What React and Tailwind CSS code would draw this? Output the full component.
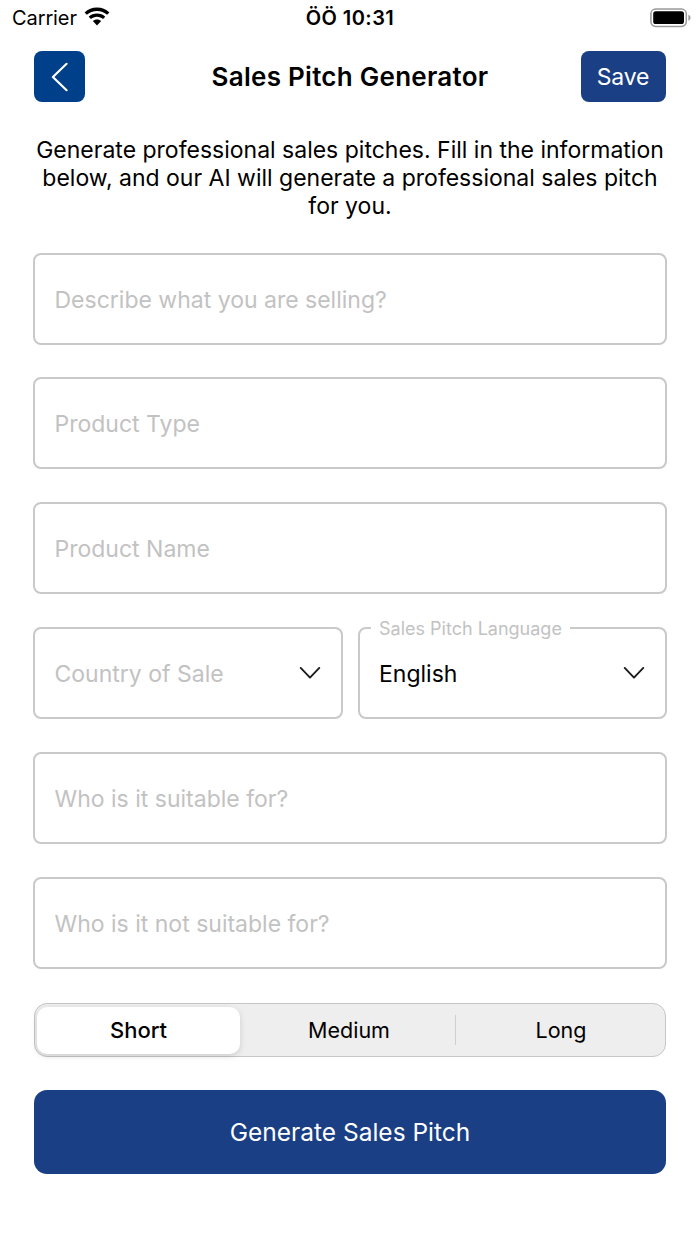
const inputBox =
  "flex h-[92px] items-center rounded-[8px] border-2 border-[#c9c9c9] pl-[19.5px] pt-[2px] text-[23px]";

function Field({ label, className = "" }) {
  return (
    <div className={`${inputBox} text-[#c2c2c2] ${className}`}>
      <span className="whitespace-nowrap">{label}</span>
    </div>
  );
}

function Chevron() {
  return (
    <svg width="22" height="14" viewBox="0 0 22 14" fill="none" className="mb-[2px] shrink-0">
      <path d="M1.7 1.9 L11 11.6 L20.3 1.9" stroke="#1c1c1e" strokeWidth="1.9" strokeLinecap="round" strokeLinejoin="round" />
    </svg>
  );
}

function WifiIcon() {
  return (
    <svg width="26" height="19" viewBox="0 0 26 19" className="shrink-0">
      <path d="M13 0.6 C8.2 0.6 3.9 2.4 0.6 5.4 L2.9 7.8 C5.6 5.3 9.1 3.9 13 3.9 C16.9 3.9 20.4 5.3 23.1 7.8 L25.4 5.4 C22.1 2.4 17.8 0.6 13 0.6 Z" />
      <path d="M13 6.6 C9.8 6.6 6.9 7.8 4.7 9.8 L7 12.1 C8.6 10.7 10.7 9.8 13 9.8 C15.3 9.8 17.4 10.7 19 12.1 L21.3 9.8 C19.1 7.8 16.2 6.6 13 6.6 Z" />
      <path d="M13 12.5 C11.4 12.5 9.9 13.1 8.8 14.1 L13 18.4 L17.2 14.1 C16.1 13.1 14.6 12.5 13 12.5 Z" />
    </svg>
  );
}

function BatteryIcon() {
  return (
    <svg width="41" height="20" viewBox="0 0 41 20" className="shrink-0">
      <rect x="0.9" y="1" width="35.4" height="17.4" rx="4.8" fill="none" stroke="#999" strokeWidth="1.5" />
      <rect x="3.2" y="3.3" width="30.8" height="12.8" rx="2.6" fill="#000" />
      <path d="M38.4 6.7 C39.8 7.2 40.5 8.4 40.5 9.7 C40.5 11 39.8 12.2 38.4 12.7 Z" fill="#999" />
    </svg>
  );
}

export default function App() {
  return (
    <div className="flex h-[1244px] w-[700px] flex-col overflow-hidden bg-white font-['Inter','Liberation_Sans',sans-serif] text-black">
      <div className="grid h-[36px] grid-cols-3 items-center pl-[12px] pr-[9px] text-[20px]">
        <div className="flex items-center gap-[7.5px]">
          <span className="tracking-[-0.1px]">Carrier</span>
          <div className="pb-[3px]"><WifiIcon /></div>
        </div>
        <div className="pr-[3px] text-center font-semibold tracking-[0.45px] whitespace-nowrap">ÖÖ 10:31</div>
        <div className="flex justify-end pb-[1px]"><BatteryIcon /></div>
      </div>

      <div className="mx-[34px] mt-[15px] grid h-[51px] grid-cols-[85px_1fr_85px] items-center">
        <button className="flex h-[51px] w-[51px] items-center justify-center rounded-[8px] bg-[#00408a]">
          <svg width="18" height="30" viewBox="0 0 18 30" fill="none">
            <path d="M15.6 1.8 L1.9 15 L15.6 28.2" stroke="#fff" strokeWidth="2.2" strokeLinecap="round" strokeLinejoin="round" />
          </svg>
        </button>
        <h1 className="text-center text-[26px] font-semibold tracking-[0.27px] whitespace-nowrap">Sales Pitch Generator</h1>
        <button className="h-[51px] w-[85px] rounded-[8px] bg-[#1a3f84] pt-[2px] pr-[1px] text-[23px] tracking-[-0.2px] text-white">Save</button>
      </div>

      <p className="mt-[34px] text-center text-[23px] leading-[28px]">
        Generate professional sales pitches. Fill in the information
        <br />
        below, and our AI will generate a professional sales pitch
        <br />
        for you.
      </p>

      <div className="mx-[33px] mt-[33px] flex flex-col gap-[33px]">
        <Field label="Describe what you are selling?" className="-mb-px" />
        <Field label="Product Type" />
        <Field label="Product Name" />
        <div className="grid grid-cols-2 gap-[15px]">
          <div className={`${inputBox} justify-between pr-[19.5px] text-[#c2c2c2]`}>
            <span>Country of Sale</span>
            <Chevron />
          </div>
          <div className={`${inputBox} relative justify-between pr-[20px]`}>
            <span className="absolute -top-[11px] left-[11px] bg-white px-[8.5px] text-[18px] leading-[22px] whitespace-nowrap text-[#c2c2c2]">
              Sales Pitch Language
            </span>
            <span>English</span>
            <Chevron />
          </div>
        </div>
        <Field label="Who is it suitable for?" />
        <Field label="Who is it not suitable for?" />
      </div>

      <div className="mx-[34px] mt-[34px] flex h-[54px] items-center rounded-[13px] border border-[#c6c6c6] bg-[#eeeeee] text-[22px]">
        <div className="mt-px ml-[2px] flex h-[47px] w-[203px] items-center justify-center rounded-[10px] bg-white font-medium shadow-[0_2px_6px_rgba(0,0,0,0.14)]">
          Short
        </div>
        <div className="flex w-[215px] items-center justify-center pl-[3px] text-[21.5px]">
          Medium
        </div>
        <div className="h-[30px] w-px bg-[#cfcfcf]" />
        <div className="flex flex-1 items-center justify-center pl-px text-[21.5px]">Long</div>
      </div>

      <button className="mx-[34px] mt-[33px] h-[84px] rounded-[13px] bg-[#1a3f84] text-[24.5px] text-white">
        Generate Sales Pitch
      </button>
    </div>
  );
}
